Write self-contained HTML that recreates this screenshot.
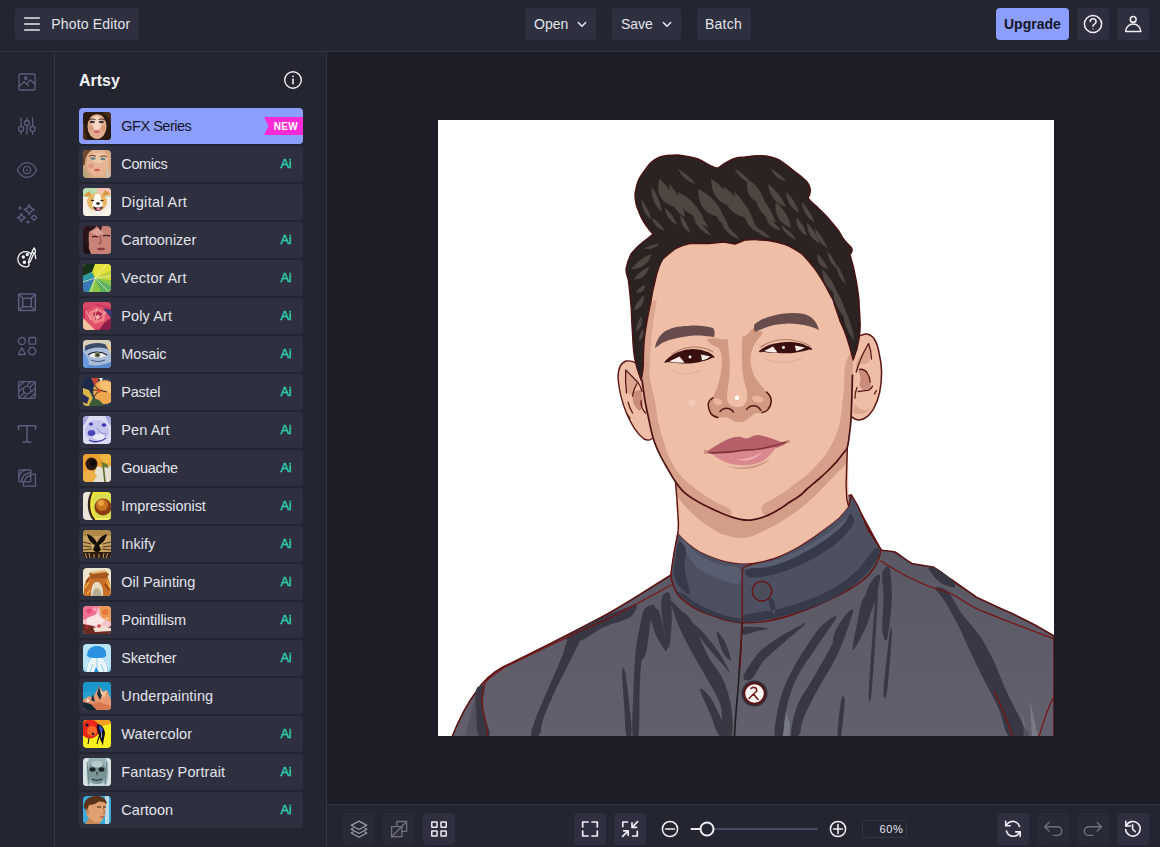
<!DOCTYPE html>
<html lang="en">
<head>
<meta charset="utf-8">
<title>Photo Editor</title>
<style>
*{box-sizing:border-box;margin:0;padding:0}
html,body{width:1160px;height:847px;overflow:hidden;background:#1c1d27;font-family:"Liberation Sans",sans-serif;color:#e6e7ee}
.abs{position:absolute}
#top{position:absolute;left:0;top:0;width:1160px;height:52px;background:#232531;border-bottom:1px solid #343648}
.btn{position:absolute;top:8px;height:32px;background:#2e3040;border-radius:4px;font-size:14px;line-height:32px;color:#e3e4ea;white-space:nowrap}
.btn span{position:absolute;top:0}
#rail{position:absolute;left:0;top:52px;width:55px;height:795px;background:#232531;border-right:1px solid #343648}
#panel{position:absolute;left:55px;top:52px;width:272px;height:795px;background:#232531;border-right:1px solid #343648}
#stage{position:absolute;left:327px;top:52px;width:833px;height:752px;background:#1c1d27}
#bot{position:absolute;left:327px;top:804px;width:833px;height:43px;background:#232531;border-top:1px solid #343648}
.ico{position:absolute;left:15px;width:24px;height:24px;fill:none;stroke:#5b5e7e;stroke-width:1.4;stroke-linecap:round;stroke-linejoin:round}
h2{position:absolute;left:79px;top:71px;letter-spacing:0;font-size:16px;font-weight:700;color:#f2f3f7;line-height:20px}
.it{position:absolute;left:79px;width:224px;height:36px;background:#2e3040;border-radius:4px}
.it .th{position:absolute;left:4px;top:4px;width:28px;height:28px;border-radius:4px;overflow:hidden}
.it .th svg{display:block;width:28px;height:28px}
.it .lb{position:absolute;left:42.300px;top:0;line-height:36px;font-size:14.5px;color:#e3e4ea;white-space:nowrap}
.it .ai{position:absolute;left:201.500px;top:0;line-height:36px;font-size:13px;font-weight:400;color:#2fd2b0;letter-spacing:-.3px;-webkit-text-stroke:.35px #2fd2b0}
.it.sel{background:#8c9eff}
.it.sel .lb{color:#15161f}
.bb{position:absolute;top:8px;width:32px;height:32px;border-radius:4px;background:#2e3040}
.bb.dis{background:#282a37}
.bb svg{position:absolute;left:4px;top:4px;width:24px;height:24px;fill:none;stroke:#e6e7ee;stroke-width:1.5;stroke-linecap:round;stroke-linejoin:round}
.bb.dis svg{stroke:#7b7d8c}
</style>
</head>
<body>
<div id="top">
  <div class="btn" style="left:15px;width:124px">
    <svg class="abs" style="left:8px;top:8px" width="18" height="16" viewBox="0 0 18 16" fill="none" stroke="#e6e7ee" stroke-width="1.5" stroke-linecap="round"><path d="M1.7 2h14.6M1.7 8h14.6M1.7 14h14.6"/></svg>
    <span style="left:36.300px;letter-spacing:.16px">Photo Editor</span>
  </div>
  <div class="btn" style="left:525px;width:71px"><span style="left:9px">Open</span>
    <svg class="abs" style="left:52px;top:13px" width="10" height="7" viewBox="0 0 10 7" fill="none" stroke="#e6e7ee" stroke-width="1.5" stroke-linecap="round" stroke-linejoin="round"><path d="M1.3 1.5 5 5.3 8.7 1.5"/></svg></div>
  <div class="btn" style="left:612px;width:69px"><span style="left:9px">Save</span>
    <svg class="abs" style="left:50px;top:13px" width="10" height="7" viewBox="0 0 10 7" fill="none" stroke="#e6e7ee" stroke-width="1.5" stroke-linecap="round" stroke-linejoin="round"><path d="M1.3 1.5 5 5.3 8.7 1.5"/></svg></div>
  <div class="btn" style="left:697px;width:54px"><span style="left:8px;letter-spacing:.24px">Batch</span></div>
  <div class="btn" style="left:996px;width:73px;background:#8c9eff;color:#15161f;font-weight:700"><span style="left:8px">Upgrade</span></div>
  <div class="btn" style="left:1077px;width:32px">
    <svg class="abs" style="left:4px;top:4px" width="24" height="24" viewBox="0 0 24 24" fill="none" stroke="#f0f0f4" stroke-width="1.5" stroke-linecap="round" stroke-linejoin="round"><circle cx="12" cy="12" r="8.6"/><path d="M9.2 9.6a2.9 2.9 0 1 1 4.3 2.5c-.9.5-1.5 1-1.500 2.100"/><circle cx="12" cy="16.900" r=".6" fill="#f0f0f4" stroke="none"/></svg>
  </div>
  <div class="btn" style="left:1117px;width:32px">
    <svg class="abs" style="left:4px;top:4px" width="24" height="24" viewBox="0 0 24 24" fill="none" stroke="#f0f0f4" stroke-width="1.5" stroke-linecap="round" stroke-linejoin="round"><circle cx="12.200" cy="7.400" r="2.900"/><path d="M4.600 19.600a7.600 7.600 0 0 1 15.200 0z"/></svg>
  </div>
</div>

<div id="rail">
<svg class="abs" style="left:0;top:0" width="54" height="795" viewBox="0 52 54 795" fill="none" stroke="#5b5e7e" stroke-width="1.300" stroke-linecap="round" stroke-linejoin="round">
  <!-- image manager -->
  <g><rect x="19" y="74" width="16" height="16" rx="1.2"/><circle cx="25.700" cy="78.300" r="1.300"/><path d="M19.200 86.200 24 81.700 28.300 85.600M26.400 83.900 30.500 80 34.800 84"/></g>
  <!-- edit sliders -->
  <g><path d="M21.100 118v8.200M21.100 131.700v2.500M26.900 118v2.300M26.900 125.800v8.400M32.600 118v8.200M32.600 131.700v2.500"/><circle cx="21.100" cy="128.900" r="2.500"/><circle cx="26.900" cy="123" r="2.500"/><circle cx="32.600" cy="128.900" r="2.500"/></g>
  <!-- touch up eye -->
  <g><path d="M17.300 170c2.500-4.700 6-7.300 9.700-7.300s7.200 2.600 9.700 7.300c-2.500 4.700-6 7.300-9.700 7.300s-7.200-2.600-9.700-7.300z"/><circle cx="27" cy="170" r="3.700"/><circle cx="27" cy="170" r="1" fill="#5b5e7e" stroke="none"/></g>
  <!-- effects sparkles -->
  <g stroke-width="1.300"><path d="M29.200 204.500c.7 3 1.900 4.400 5.200 5.200-3.300.8-4.500 2.200-5.200 5.200-.7-3-1.900-4.400-5.200-5.200 3.300-.8 4.500-2.200 5.200-5.200z"/><path d="M21.500 213.500c.6 2.500 1.600 3.600 4.200 4.200-2.600.6-3.600 1.700-4.200 4.200-.6-2.500-1.600-3.600-4.200-4.200 2.600-.6 3.600-1.700 4.200-4.200z"/><path d="M34 215l2.700 2.700-2.700 2.700-2.700-2.700z"/><circle cx="20" cy="208" r=".9" fill="#5b5e7e"/><circle cx="28" cy="222" r=".9" fill="#5b5e7e"/></g>
  <!-- artsy palette (active) -->
  <g stroke="#f4f4f8" stroke-width="1.300"><path d="M30.600 253.600a7.600 7.600 0 1 0-3.300 13c1.600-.3 2.200-1.500 1.700-2.700-.5-1.200.2-2.200 1.300-2.500"/><circle cx="23.300" cy="257" r="1" fill="#f4f4f8"/><circle cx="27.300" cy="254.600" r="1" fill="#f4f4f8"/><circle cx="24.400" cy="262.300" r="1.100" fill="#f4f4f8"/><path d="M34.300 247.900c1.200 1.800 1.400 3.600.6 5.400l-2.900-1.300c.6-1.500 1.400-2.900 2.300-4.100z"/><path d="M32.200 252l-3.400 8.300-.3 2.300 1.900-1.400 3.600-8.300"/><path d="M34.900 254l.9 4.500"/></g>
  <!-- frames -->
  <g stroke-width="1.500"><rect x="18.700" y="293.900" width="16.600" height="16.600" rx="1"/><rect x="22.800" y="298.300" width="8.400" height="8.400"/><path d="M18.900 294.200l3.900 4.100M35.100 294.200l-3.900 4.100M18.900 310.300l3.900-3.600M35.100 310.300l-3.900-3.600"/></g>
  <!-- graphics shapes -->
  <g><circle cx="21.900" cy="341" r="3.500"/><rect x="29" y="337.500" width="6.700" height="6.700" rx=".8"/><path d="M21.900 347.800l3.600 6.700h-7.200z"/><path d="M30.100 347.600h3.900l2 3.500-2 3.500h-3.900l-2-3.500z"/></g>
  <!-- textures -->
  <g stroke-width="1.300"><rect x="18.700" y="381.700" width="16.600" height="16.600" rx="1"/><circle cx="27" cy="390" r="3.800" stroke-dasharray="2.200 1"/><path d="M19 386.500l4.800-4.500M19 391.500l3.500-3.300M19 397.800l5-4.800M35 393.500l-4.800 4.500M35 388.500l-3.500 3.300M35 382.200l-5 4.800M23.500 398l3-2.800M30.500 382l-3 2.800"/></g>
  <!-- text -->
  <g stroke-width="1.500"><path d="M18.500 429.400v-3.600h17v3.600M27 425.800v16.100M23.100 441.900h7.800"/></g>
  <!-- overlays -->
  <g><rect x="18.800" y="469.800" width="12" height="12" rx=".8"/><path d="M23.400 482v4.200h12v-12h-4.400"/><path d="M19 476.500c.8-3.600 3-5.700 6.600-6.500M21.400 481.500c.3-5 2.800-8 9.200-9M24.500 481.700c.5-3.500 2.500-5.500 6.100-6.200"/></g>
</svg>
</div>
<div id="panel"></div>
<h2>Artsy</h2>
<svg class="abs" style="left:281px;top:68px" width="24" height="24" viewBox="0 0 24 24" fill="none" stroke="#f0f0f4" stroke-width="1.400" stroke-linecap="round"><circle cx="12" cy="12" r="8.300"/><path d="M12 11.200v4.600" stroke-width="1.600"/><circle cx="12" cy="8.300" r=".9" fill="#f0f0f4" stroke="none"/></svg>
<div class="it sel" style="top:108px"><div class="th"><svg viewBox="0 0 28 28"><rect width="28" height="28" fill="#2a1a12"/><ellipse cx="14" cy="14.500" rx="9.500" ry="12.500" fill="#e2ad8e"/><ellipse cx="13.500" cy="11" rx="5.500" ry="7" fill="#f4d6c2"/><path d="M0 0h28v28h-4.500c2.500-8 2.500-18-1.500-23.500-3-3-13-3-16.500.5C2 10 2.500 20 4.500 28H0z" fill="#2a1a12"/><path d="M2 14c0 5 1 10 2.500 14H0V10zM24 4c3 3 4 8 4 12V0h-8z" fill="#4a2c18"/><ellipse cx="9.300" cy="10" rx="2.600" ry="1.200" fill="#3c3436"/><ellipse cx="18.300" cy="10" rx="2.600" ry="1.200" fill="#3c3436"/><path d="M6 8c2-1.200 4.500-1.200 6.500-.3M15.500 7.700c2-1 4.500-1 6.500.3" stroke="#2a1a12" stroke-width=".9" fill="none"/><ellipse cx="13.800" cy="19.800" rx="3" ry="1.400" fill="#d0606a"/><ellipse cx="8" cy="16" rx="2.500" ry="3" fill="#d49478" opacity=".7"/><ellipse cx="20" cy="16" rx="2.500" ry="3" fill="#d49478" opacity=".7"/></svg></div><div class="lb" style="letter-spacing:-0.49px">GFX Series</div><svg class="abs" style="left:185px;top:9px" width="39" height="18" viewBox="0 0 39 18"><path d="M0 0h39v18H0l4.500-9z" fill="#fb29d6"/><text x="21.800" y="12.800" text-anchor="middle" font-family="Liberation Sans,sans-serif" font-weight="700" font-size="10" fill="#fff" letter-spacing=".3">NEW</text></svg></div>
<div class="it" style="top:146px"><div class="th"><svg viewBox="0 0 28 28"><rect width="28" height="28" fill="#d9a684"/><ellipse cx="15" cy="13" rx="11" ry="14" fill="#e7b493"/><ellipse cx="16" cy="8" rx="8" ry="5" fill="#f1c7a8"/><path d="M0 0h9C4 3 2 8 2 14L0 16z" fill="#6b4a32"/><path d="M0 16l3 4 4 8H0z" fill="#b9a67a"/><path d="M24 14c2 4 2 9 4 12v2h-6c2-4 2-9 2-14z" fill="#c9c0a8"/><ellipse cx="10" cy="8.500" rx="2.600" ry="1.200" fill="#5d7e84"/><ellipse cx="20" cy="9" rx="2.600" ry="1.200" fill="#5d7e84"/><path d="M6 6.500c2-1.500 5-1.500 7 0M17 7c2-1.500 5-1.500 7 0" stroke="#5a3520" stroke-width="1" fill="none"/><ellipse cx="14" cy="20" rx="3" ry="1.300" fill="#c9615a"/><ellipse cx="8" cy="16" rx="3" ry="2.500" fill="#e09a84"/></svg></div><div class="lb" style="letter-spacing:-0.38px">Comics</div><div class="ai">Ai</div></div>
<div class="it" style="top:184px"><div class="th"><svg viewBox="0 0 28 28"><rect width="28" height="28" fill="#f3ede4"/><path d="M0 0h28v9H0z" fill="#b9dfb0"/><path d="M14 0h14v8H14z" fill="#f4c3b4"/><path d="M0 8l6-5 4 6zM28 6l-6-4-4 7z" fill="#d99a48"/><ellipse cx="14" cy="14" rx="10" ry="9" fill="#e9b566"/><path d="M12 6h5l3 12-5 8-6-8z" fill="#fffdf8"/><path d="M2 18c4 6 8 9 12 9s9-3 12-9l2 10H0z" fill="#fbf4e8"/><ellipse cx="9.500" cy="12.500" rx="1.800" ry=".8" fill="#3a2a1a"/><ellipse cx="19" cy="12.500" rx="1.800" ry=".8" fill="#3a2a1a"/><ellipse cx="15" cy="15.500" rx="1.800" ry="1.300" fill="#1a1210"/><path d="M10 18c3 2 7 2 10 0-1 4-3 5-5 5s-4-1-5-5z" fill="#3a1a1a"/><ellipse cx="15.500" cy="21" rx="2.200" ry="1.400" fill="#f08aa0"/></svg></div><div class="lb" style="letter-spacing:0.35px">Digital Art</div></div>
<div class="it" style="top:222px"><div class="th"><svg viewBox="0 0 28 28"><rect width="28" height="28" fill="#c47a70"/><path d="M0 0h14C8 4 7 12 6 20L3 28H0z" fill="#2a161a"/><path d="M6 6c4-4 12-5 22-4v26H8c-2-6-3-14-2-22z" fill="#c98278"/><path d="M8 6c2-3 6-4 10-4l2 6-6 2z" fill="#dba094"/><path d="M0 18l5 2 3 8H0z" fill="#1e1014"/><path d="M9 11c2-.8 4-.8 6 0M20 10c2-.8 4-.8 7 0" stroke="#3a1a1e" stroke-width="1.300" fill="none"/><path d="M17 9l1 8-3 1" stroke="#8a4a48" stroke-width="1" fill="none"/><ellipse cx="18" cy="23" rx="4" ry="1.300" fill="#8a3a40"/><path d="M14 0h5l-1 5z" fill="#3a1a1e"/></svg></div><div class="lb" style="letter-spacing:0.0px">Cartoonizer</div><div class="ai">Ai</div></div>
<div class="it" style="top:260px"><div class="th"><svg viewBox="0 0 28 28"><rect width="28" height="28" fill="#d8dc3a"/><path d="M0 0h12L9 8 0 12z" fill="#16301c"/><path d="M0 12l9-4 3 6-6 14H0z" fill="#2a9aa0"/><path d="M12 0h16v14L12 14z" fill="#e4e23a"/><path d="M12 14l16-8v8z" fill="#c4d040"/><path d="M6 28l6-14 16 2v12z" fill="#8cc848"/><path d="M12 14L28 22v6H18z" fill="#5cb060"/><path d="M0 20c3-4 7-6 12-6L4 28H0z" fill="#3a78b8"/><path d="M12 14L24 0M12 14l16-2M12 14l14 14M12 14L8 28M12 14L0 18" stroke="#f4f8c8" stroke-width=".7" fill="none"/></svg></div><div class="lb" style="letter-spacing:0.25px">Vector Art</div><div class="ai">Ai</div></div>
<div class="it" style="top:298px"><div class="th"><svg viewBox="0 0 28 28"><rect width="28" height="28" fill="#c4305a"/><path d="M0 0h28v6L14 2 0 8z" fill="#d84868"/><path d="M2 8l10-5 12 3 4 10-6 10-12 2-8-8z" fill="#e0506c"/><path d="M6 10l8-4 9 4-2 9-9 3-6-6z" fill="#f08088"/><path d="M10 11l5-2 5 3-2 5-6 1z" fill="#b82850"/><path d="M0 16l8 8 4 4H0z" fill="#f4c4a0"/><path d="M22 20l6-4v12H16z" fill="#8a1c48"/><path d="M12 14l4-1 1 3-4 1z" fill="#f8b0a8"/><path d="M20 6l8 2v8z" fill="#3a3a78"/><path d="M3 9l5 9M14 6l-3 12M23 10l-10 8" stroke="#f8d8c8" stroke-width=".6" fill="none"/></svg></div><div class="lb" style="letter-spacing:0.12px">Poly Art</div><div class="ai">Ai</div></div>
<div class="it" style="top:336px"><div class="th"><svg viewBox="0 0 28 28"><rect width="28" height="28" fill="#a8bcd8"/><path d="M0 0h28v8C20 3 8 3 0 9z" fill="#d8d0b8"/><path d="M2 6c8-4 18-4 26 1v4C20 6 9 7 2 11z" fill="#3a4a6a"/><path d="M0 22c6 4 16 5 28 0v6H0z" fill="#5a8ad0"/><path d="M0 12c4 4 6 8 6 14l-6 2z" fill="#6a9ae0"/><path d="M5 15c5-4 13-4 19 0-6 4-14 4-19 0z" fill="#f4f4f0"/><path d="M5 15c5-4 13-4 19 0" stroke="#1a2038" stroke-width="1.200" fill="none"/><circle cx="14.500" cy="15" r="2.800" fill="#7a8a5a"/><circle cx="14.500" cy="15" r="1.200" fill="#1a2030"/><path d="M22 4l6 2v8z" fill="#e8c890"/><path d="M8 20c4 2 10 2 14 0" stroke="#2a3a68" stroke-width=".8" fill="none"/></svg></div><div class="lb" style="letter-spacing:-0.15px">Mosaic</div><div class="ai">Ai</div></div>
<div class="it" style="top:374px"><div class="th"><svg viewBox="0 0 28 28"><rect width="28" height="28" fill="#2a3a5a"/><path d="M12 6c5-5 12-5 16-2v20c-6 4-12 2-15-2s-4-11-1-16z" fill="#f0a850"/><path d="M16 6c4-3 8-3 12-1v10c-5 0-9-3-12-9z" fill="#f8c070"/><path d="M0 0h8l4 8-6 4-6-2z" fill="#1a2a4a"/><path d="M8 0h8l-4 8z" fill="#c84838"/><path d="M0 10l6 2 4 8-4 8H0z" fill="#d8b848"/><path d="M6 28l4-8 6 2 6 6z" fill="#3a5a38"/><path d="M0 16l6 4-2 6-4-2z" fill="#2a2a58"/><path d="M10 20l6-8M12 8l4 4 8 2M6 12l10 0" stroke="#1a1a2a" stroke-width=".9" fill="none"/><path d="M14 12l3-1 1 3-3 1z" fill="#e84828"/><path d="M16 0h4l-2 4z" fill="#f4f0d8"/></svg></div><div class="lb" style="letter-spacing:-0.22px">Pastel</div><div class="ai">Ai</div></div>
<div class="it" style="top:412px"><div class="th"><svg viewBox="0 0 28 28"><rect width="28" height="28" fill="#dcdcf4"/><ellipse cx="14" cy="15" rx="12" ry="11" fill="#c4c4ec"/><path d="M0 0h6L2 8 0 10zM28 0h-6l4 8 2 2z" fill="#a8a8e0"/><ellipse cx="8" cy="8" rx="2" ry="1.500" fill="#3a3ab0"/><ellipse cx="21" cy="9" rx="2.400" ry="1.800" fill="#3a3ab0"/><ellipse cx="8.500" cy="17" rx="3.800" ry="3" fill="#4848b8"/><path d="M6 24c5 3 12 2 17-2" stroke="#4040b0" stroke-width="1.300" fill="none"/><path d="M14 12c2 4 6 6 10 6" stroke="#8080d0" stroke-width=".8" fill="none"/><ellipse cx="16" cy="21" rx="6" ry="3" fill="#e8e8f8"/></svg></div><div class="lb" style="letter-spacing:0.1px">Pen Art</div><div class="ai">Ai</div></div>
<div class="it" style="top:450px"><div class="th"><svg viewBox="0 0 28 28"><rect width="28" height="28" fill="#e8a838"/><path d="M14 12h14v16H8z" fill="#e4e0d4"/><path d="M0 0h28v8l-8 6-6-2-8 8-6 2z" fill="#e8a030"/><ellipse cx="8.500" cy="10" rx="6" ry="6.500" fill="#2a1810"/><path d="M16 2l6-2h6v8l-6 2z" fill="#f0b840"/><path d="M0 18l8-2 6 6-4 6H0z" fill="#f0b048"/><path d="M20 10l2 18" stroke="#5a6a28" stroke-width="1.600" fill="none"/><path d="M18 8l6 2 2 4-6-1z" fill="#6a7a30"/><ellipse cx="10" cy="9" rx="3" ry="3.500" fill="#120a08"/></svg></div><div class="lb" style="letter-spacing:-0.33px">Gouache</div><div class="ai">Ai</div></div>
<div class="it" style="top:488px"><div class="th"><svg viewBox="0 0 28 28"><rect width="28" height="28" fill="#ece6da"/><path d="M8 0h20v28H10C4 22 3 8 8 0z" fill="#3a2418"/><path d="M10 0h18v27H12C6 21 6 8 10 0z" fill="#f0e438"/><path d="M12 2h16v24H14C9 20 9 8 12 2z" fill="#d8dc50"/><circle cx="20" cy="15" r="8.500" fill="#8a3c10"/><circle cx="19" cy="13" r="6" fill="#c87420"/><circle cx="18" cy="11" r="3" fill="#e8a040"/><path d="M12 26h16v2H12z" fill="#f4ec60"/></svg></div><div class="lb" style="letter-spacing:-0.07px">Impressionist</div><div class="ai">Ai</div></div>
<div class="it" style="top:526px"><div class="th"><svg viewBox="0 0 28 28"><rect width="28" height="28" fill="#c8a060"/><path d="M0 0h28v6H0z" fill="#b08848"/><path d="M4 4c4 1 8 4 10 9 2-5 6-8 10-9-1 5-4 9-8 11l2 5-4 3-4-3 2-5C8 13 5 9 4 4z" fill="#140e08"/><path d="M0 22h28v6H0z" fill="#2a1c10"/><path d="M0 12l8 2M0 16l8 1M0 20l9-1M28 12l-8 2M28 16l-8 1M28 20l-9-1" stroke="#2a1c10" stroke-width=".8" fill="none"/><path d="M2 23l2 5M6 23l1 5M11 24v4M16 24v4M21 23l-1 5M25 23l-2 5" stroke="#c8a060" stroke-width="1" fill="none"/></svg></div><div class="lb" style="letter-spacing:0.03px">Inkify</div><div class="ai">Ai</div></div>
<div class="it" style="top:564px"><div class="th"><svg viewBox="0 0 28 28"><rect width="28" height="28" fill="#ece4cc"/><path d="M1 28C0 16 4 8 10 6l10-1c6 2 8 12 8 23h-8c0-8-2-14-6-14s-6 6-6 14z" fill="#c8702a"/><path d="M6 5l16-2 4 3-2 4-16 1z" fill="#a85820"/><path d="M8 4l14-2 2 2-15 2z" fill="#e8b870"/><path d="M8 28c0-8 2-14 6-14s6 6 6 14z" fill="#e4dcc4"/><path d="M9 28c1-5 3-8 5-8s4 3 5 8z" fill="#b8ac90"/><path d="M2 20l4-6M24 12l3 8M4 26l3-4" stroke="#f0c040" stroke-width="1.200" fill="none"/><path d="M22 16l4 6M3 14l3-4" stroke="#7a2c10" stroke-width="1.200" fill="none"/></svg></div><div class="lb" style="letter-spacing:-0.02px">Oil Painting</div><div class="ai">Ai</div></div>
<div class="it" style="top:602px"><div class="th"><svg viewBox="0 0 28 28"><rect width="28" height="28" fill="#f4c4cc"/><path d="M0 0h16l-4 10-12 4z" fill="#f07090"/><path d="M16 0h12v16l-10-4z" fill="#e89858"/><path d="M4 12l10-4 8 6-6 6-12-2z" fill="#fae4e4"/><path d="M0 18l10 2 8 4 10-4v8H0z" fill="#6a2a20"/><path d="M10 22l10-2 8 2v3l-16 1z" fill="#f4e0d0"/><circle cx="6" cy="5" r="2.500" fill="#e84878"/><circle cx="22" cy="6" r="3" fill="#e87838"/><circle cx="12" cy="3" r="2" fill="#f8a0b8"/><circle cx="4" cy="21" r="2" fill="#a82838"/><circle cx="24" cy="13" r="2" fill="#f4b880"/><circle cx="16" cy="20" r="1.800" fill="#c84848"/></svg></div><div class="lb" style="letter-spacing:-0.05px">Pointillism</div><div class="ai">Ai</div></div>
<div class="it" style="top:640px"><div class="th"><svg viewBox="0 0 28 28"><rect width="28" height="28" fill="#b8e4f8"/><path d="M4 12C4 4 10 2 14 2s10 2 9 10c-2 2-5 2-9 2s-8 0-10-2z" fill="#2a90e0"/><path d="M2 28c0-8 3-12 6-14h12c3 2 6 6 6 14z" fill="#e8f6fc"/><path d="M8 14c-3 4-5 8-5 14M20 14c3 4 5 8 5 14M14 14v14M10 20l-3 8M18 20l3 8" stroke="#7ab8e0" stroke-width=".7" fill="none"/><path d="M11 28l2-5 3 5z" fill="#2a90e0"/><path d="M0 22l4 6H0zM28 22l-4 6h4z" fill="#8cccf0"/></svg></div><div class="lb" style="letter-spacing:-0.28px">Sketcher</div><div class="ai">Ai</div></div>
<div class="it" style="top:678px"><div class="th"><svg viewBox="0 0 28 28"><rect width="28" height="28" fill="#2aa0d0"/><path d="M0 0h28v10H0z" fill="#1a98cc"/><path d="M0 18l6-4 4 2 6-12 4 6 4-2 4 10v10H0z" fill="#e89870"/><path d="M16 4l-2 8 3 6 3-8z" fill="#1a3038"/><path d="M10 12l-2 6 4 2z" fill="#1a3038"/><path d="M16 4l4 6 4-2-3 8-3-4z" fill="#f4c4a0"/><path d="M0 20l8 2 6 6H0z" fill="#142830"/><path d="M8 22l8-2 12 4v4H14z" fill="#d87850"/><path d="M4 16l3 3-3 1z" fill="#f8f0e8"/></svg></div><div class="lb" style="letter-spacing:0.13px">Underpainting</div></div>
<div class="it" style="top:716px"><div class="th"><svg viewBox="0 0 28 28"><rect width="28" height="28" fill="#f8f020"/><path d="M0 0h28v4L0 10z" fill="#f4a020"/><circle cx="7" cy="9" r="9.500" fill="#e82818"/><circle cx="9" cy="11" r="5" fill="#f86828"/><circle cx="4" cy="5" r="1.600" fill="#1a1a38"/><circle cx="10" cy="14" r="1.300" fill="#1a1a38"/><path d="M14 4c4 0 8 4 8 10-1 4-2 8-2 12-1-4-3-6-4-10s-3-8-2-12z" fill="#0a0a18"/><path d="M16 6c2 0 4 2 4 5l-3 1z" fill="#3858d8"/><path d="M6 18l-1 6M16 16l-2 8" stroke="#0a0a18" stroke-width="1" fill="none"/><path d="M18 12c1 2 1 4 0 6" stroke="#f8f8f8" stroke-width=".8" fill="none"/></svg></div><div class="lb" style="letter-spacing:0.14px">Watercolor</div><div class="ai">Ai</div></div>
<div class="it" style="top:754px"><div class="th"><svg viewBox="0 0 28 28"><rect width="28" height="28" fill="#8aa4a8"/><path d="M0 0h28v28H0z" fill="#9ab4b8"/><path d="M0 0h6C3 8 3 18 5 28H0zM28 0h-5c3 8 3 18 0 28h5z" fill="#d8e4e4"/><ellipse cx="14" cy="14" rx="9" ry="12" fill="#7a9498"/><ellipse cx="14" cy="6" rx="6" ry="3.500" fill="#b8cccc"/><ellipse cx="9.500" cy="11.500" rx="3" ry="2.200" fill="#1a2428"/><ellipse cx="18.500" cy="11.500" rx="3" ry="2.200" fill="#1a2428"/><path d="M13 14l1 4 1-4z" fill="#2a3a3e"/><path d="M9 21c3 1.500 7 1.500 10 0" stroke="#243034" stroke-width="1.100" fill="none"/><path d="M6 24c4 3 12 3 16 0v4H6z" fill="#c8d8d8"/><path d="M4 4l2 22M24 4l-2 22" stroke="#5a7478" stroke-width=".8" fill="none"/></svg></div><div class="lb" style="letter-spacing:0.09px">Fantasy Portrait</div><div class="ai">Ai</div></div>
<div class="it" style="top:792px"><div class="th"><svg viewBox="0 0 28 28"><rect width="28" height="28" fill="#3aa8d8"/><path d="M22 0h4v28h-4z" fill="#b8dce8"/><path d="M2 10c0-6 6-9 12-9s9 3 9 8l-1 10-4 7h-8l-6-6z" fill="#e0a070"/><path d="M1 12C0 4 6 0 13 0c6 0 10 2 11 8-3-2-6-3-9-2-2 2-6 3-9 3l-2 6z" fill="#5a3418"/><path d="M6 22l6 4h6l-2 2H2z" fill="#c88858"/><path d="M14 11h4M20 11h3" stroke="#3a2010" stroke-width="1.200" fill="none"/><path d="M20 12l2 5-2 1" stroke="#a86840" stroke-width=".9" fill="none"/><path d="M17 21h4" stroke="#8a4030" stroke-width="1" fill="none"/><path d="M3 12l3 3-1 5z" fill="#c08050"/></svg></div><div class="lb" style="letter-spacing:0.03px">Cartoon</div><div class="ai">Ai</div></div>
<div id="stage">
<svg class="abs" style="left:111px;top:68px" width="616" height="616" viewBox="438 120 616 616">
<defs>
<clipPath id="cv"><rect x="438" y="120" width="616" height="616"/></clipPath>
<linearGradient id="sh" x1="0" y1="0" x2="0" y2="1"><stop offset="0" stop-color="#575663"/><stop offset="1" stop-color="#63606d"/></linearGradient>
</defs>
<rect x="438" y="120" width="616" height="616" fill="#fff"/>
<g clip-path="url(#cv)" stroke-linejoin="round" stroke-linecap="round">
<!-- SHIRT -->
<path id="shirt" d="M452 737C458 722 466 705 476 692C483 681 492 673 503 667C530 654 560 639 598 619C620 608 645 591 671 575L678 533L851 495L881 550C886 551 891 551 895 552C901 556 906 560 912 563.500C919 565 926 566 933 567C940 571 946 576 952 580C960 586 968 591 976 597C987 602 999 608 1011 613C1019 617 1027 621 1035 625L1054 636V737z" fill="url(#sh)" stroke="#5a1212" stroke-width="1.600"/>
<!-- shirt folds dark -->
<path fill="#383844" d="M671.0 602.4C671.4 599.7 677.9 607.6 681.4 610.7C684.8 613.8 687.2 613.4 691.7 621.0C696.2 628.6 703.1 646.6 708.3 656.2C713.4 665.9 719.0 670.7 722.8 679.0C726.6 687.2 729.5 696.6 731.0 705.9C732.6 715.2 733.4 730.0 732.1 734.8C730.7 739.7 724.7 739.7 722.8 734.8C720.9 730.0 723.1 714.8 720.7 705.9C718.3 696.9 713.1 690.0 708.3 681.0C703.4 672.1 696.6 661.0 691.7 652.1C686.9 643.1 682.8 635.5 679.3 627.2C675.9 619.0 670.7 605.2 671.0 602.4zM688.6 621.0C687.6 618.3 697.1 626.2 702.1 631.4C707.1 636.6 714.0 645.2 718.6 652.1C723.3 659.0 729.3 670.7 730.0 672.8C730.7 674.8 726.4 668.6 722.8 664.5C719.1 660.3 714.0 655.2 708.3 647.9C702.6 640.7 689.7 623.8 688.6 621.0zM650.3 612.8C651.0 609.3 655.9 605.5 658.6 610.7C661.4 615.9 665.9 637.2 666.9 643.8C667.9 650.3 666.9 652.1 664.8 650.0C662.8 647.9 656.9 637.6 654.5 631.4C652.1 625.2 649.7 616.2 650.3 612.8zM640.0 631.4C641.7 624.1 649.3 611.4 650.3 614.8C651.4 618.3 647.9 644.8 646.2 652.1C644.5 659.3 641.0 661.7 640.0 658.3C639.0 654.8 638.3 638.6 640.0 631.4zM772.4 641.7C780.7 636.2 803.4 623.1 805.5 623.1C807.6 623.1 791.7 635.5 784.8 641.7C777.9 647.9 769.7 654.1 764.1 660.3C758.6 666.6 755.2 676.2 751.7 679.0C748.3 681.7 742.8 680.7 743.4 676.9C744.1 673.1 751.0 662.1 755.9 656.2C760.7 650.3 764.1 647.2 772.4 641.7zM822.1 625.2C826.6 621.0 837.6 613.1 836.6 616.9C835.5 620.7 822.4 637.9 815.9 647.9C809.3 657.9 802.1 667.2 797.2 676.9C792.4 686.6 789.3 696.2 786.9 705.9C784.5 715.5 784.8 730.0 782.8 734.8C780.7 739.7 774.8 741.0 774.5 734.8C774.1 728.6 777.6 708.6 780.7 697.6C783.8 686.6 788.3 677.9 793.1 668.6C797.9 659.3 804.8 649.0 809.7 641.7C814.5 634.5 817.6 629.3 822.1 625.2zM842.8 621.0C846.6 614.8 853.8 605.5 853.1 610.7C852.4 615.9 844.5 639.0 838.6 652.1C832.8 665.2 823.8 678.3 817.9 689.3C812.1 700.3 806.6 710.7 803.4 718.3C800.3 725.9 801.4 732.1 799.3 734.8C797.2 737.6 791.4 739.7 791.0 734.8C790.7 730.0 793.4 715.5 797.2 705.9C801.0 696.2 808.3 686.6 813.8 676.9C819.3 667.2 825.5 657.2 830.3 647.9C835.2 638.6 839.0 627.2 842.8 621.0zM863.4 598.3C866.2 593.4 873.1 590.0 873.8 594.1C874.5 598.3 871.0 613.8 867.6 623.1C864.1 632.4 854.8 650.0 853.1 650.0C851.4 650.0 855.5 631.7 857.2 623.1C859.0 614.5 860.7 603.1 863.4 598.3zM700.0 689.3C700.0 686.6 706.6 692.1 710.3 697.6C714.1 703.1 720.0 716.2 722.8 722.4C725.5 728.6 727.6 732.8 726.9 734.8C726.2 736.9 721.4 738.3 718.6 734.8C715.9 731.4 713.4 721.7 710.3 714.1C707.2 706.6 700.0 692.1 700.0 689.3zM743.4 627.2C747.6 626.2 766.2 627.6 768.3 628.3C770.3 629.0 760.0 630.3 755.9 631.4C751.7 632.4 745.5 635.2 743.4 634.5C741.4 633.8 739.3 628.3 743.4 627.2zM716.6 631.4C716.9 629.7 722.4 636.9 724.8 641.7C727.2 646.6 731.4 658.6 731.0 660.3C730.7 662.1 725.2 656.9 722.8 652.1C720.3 647.2 716.2 633.1 716.6 631.4zM566.3 637.6C568.0 635.2 576.6 630.7 582.8 627.2C589.0 623.8 596.6 620.0 603.5 616.9C610.4 613.8 618.7 610.7 624.2 608.6C629.7 606.6 635.6 603.1 636.6 604.5C637.7 605.9 635.9 613.1 630.4 616.9C624.9 620.7 611.4 623.4 603.5 627.2C595.6 631.0 588.0 637.2 582.8 639.7C577.7 642.1 575.2 642.1 572.5 641.7C569.7 641.4 564.6 640.0 566.3 637.6zM568.3 639.7C571.4 636.6 581.1 632.8 580.8 637.6C580.4 642.4 570.8 659.3 566.3 668.6C561.8 677.9 557.7 685.2 553.9 693.4C550.1 701.7 545.9 711.4 543.5 718.3C541.1 725.2 541.4 732.1 539.4 734.8C537.3 737.6 531.4 738.3 531.1 734.8C530.8 731.4 534.2 722.4 537.3 714.1C540.4 705.9 545.6 694.8 549.7 685.2C553.9 675.5 559.0 663.8 562.1 656.2C565.2 648.6 565.2 642.8 568.3 639.7zM644.9 608.6C647.5 605.2 654.9 602.8 655.2 606.6C655.6 610.3 649.2 622.8 647.0 631.4C644.7 640.0 643.0 648.6 641.8 658.3C640.6 667.9 640.2 676.6 639.7 689.3C639.2 702.1 639.9 727.2 638.7 734.8C637.5 742.4 633.3 742.4 632.5 734.8C631.6 727.2 633.0 703.1 633.5 689.3C634.0 675.5 634.6 662.4 635.6 652.1C636.6 641.7 638.2 634.5 639.7 627.2C641.3 620.0 642.3 612.1 644.9 608.6zM662.5 596.2C663.9 593.4 668.2 590.0 669.7 594.1C671.3 598.3 672.0 612.1 671.8 621.0C671.6 630.0 669.9 646.2 668.7 647.9C667.5 649.7 665.8 637.6 664.6 631.4C663.3 625.2 661.8 616.6 661.4 610.7C661.1 604.8 661.1 599.0 662.5 596.2zM622.1 672.8C622.3 667.2 623.9 665.9 625.2 672.8C626.6 679.7 629.4 703.8 630.4 714.1C631.4 724.5 632.1 731.4 631.4 734.8C630.8 738.3 627.5 739.7 626.3 734.8C625.1 730.0 624.9 716.2 624.2 705.9C623.5 695.5 622.0 678.3 622.1 672.8zM476.3 689.3C477.7 684.8 483.5 684.5 484.6 687.2C485.6 690.0 482.1 700.0 482.5 705.9C482.8 711.7 485.4 717.6 486.6 722.4C487.8 727.2 491.1 732.8 489.7 734.8C488.3 736.9 480.6 738.3 478.3 734.8C476.1 731.4 476.6 721.7 476.3 714.1C475.9 706.6 474.9 693.8 476.3 689.3zM935.5 588.4C935.9 586.6 943.0 586.6 947.3 590.8C951.6 594.9 956.0 605.5 961.5 613.2C967.0 620.8 974.8 628.5 980.4 636.8C985.9 645.0 990.2 653.7 994.5 662.7C998.8 671.8 1002.0 681.6 1006.3 691.1C1010.6 700.5 1016.9 711.9 1020.5 719.4C1024.0 726.9 1029.5 733.2 1027.6 735.9C1025.6 738.7 1013.4 740.2 1008.7 735.9C1004.0 731.6 1002.8 718.2 999.2 710.0C995.7 701.7 991.8 695.0 987.4 686.4C983.1 677.7 978.0 667.9 973.3 658.0C968.5 648.2 963.8 636.8 959.1 627.3C954.4 617.9 948.9 607.9 944.9 601.4C941.0 594.9 935.1 590.2 935.5 588.4zM882.4 573.0C883.4 567.9 887.9 564.0 889.5 568.3C891.0 572.7 892.2 587.2 891.8 599.0C891.4 610.8 888.7 634.0 887.1 639.1C885.5 644.3 883.0 636.4 882.4 629.7C881.8 623.0 883.6 608.5 883.6 599.0C883.6 589.6 881.4 578.2 882.4 573.0zM869.4 584.8C872.8 578.2 879.2 572.3 880.0 575.4C880.8 578.6 877.1 594.7 874.1 603.7C871.2 612.8 865.7 623.4 862.3 629.7C859.0 636.0 854.5 643.9 854.1 641.5C853.7 639.1 857.4 625.0 860.0 615.5C862.5 606.1 866.1 591.5 869.4 584.8zM843.4 617.9C846.4 614.0 851.7 608.1 851.7 610.8C851.7 613.6 846.4 628.1 843.4 634.4C840.5 640.7 835.6 648.6 834.0 648.6C832.4 648.6 832.4 639.5 834.0 634.4C835.6 629.3 840.5 621.8 843.4 617.9zM889.5 634.4C890.8 625.0 892.2 625.0 891.8 634.4C891.4 643.9 888.5 681.6 887.1 691.1C885.7 700.5 883.2 700.5 883.6 691.1C884.0 681.6 888.1 643.9 889.5 634.4zM875.3 599.0C876.8 583.7 878.3 583.7 877.7 599.0C877.1 614.4 873.2 675.7 871.8 691.1C870.3 706.4 868.3 706.4 868.9 691.1C869.5 675.7 873.9 614.4 875.3 599.0zM841.1 700.5C842.3 694.6 844.6 694.6 844.6 700.5C844.6 706.4 842.3 730.0 841.1 735.9C839.9 741.8 837.5 741.8 837.5 735.9C837.5 730.0 839.9 706.4 841.1 700.5zM928.4 568.3C928.0 566.2 933.9 567.5 937.9 569.5C941.8 571.5 949.3 577.2 952.0 580.1C954.8 583.1 956.4 586.8 954.4 587.2C952.4 587.6 944.5 585.6 940.2 582.5C935.9 579.3 928.8 570.5 928.4 568.3z"/>
<path d="M476 692L486 681L482 696L485 717L489 737H465z" fill="#383844" opacity=".35"/>
<!-- light streaks -->
<g fill="#9aa0b2" opacity=".4"><path d="M786 712l4 12-1 13h-6l1-14z"/><path d="M1030 700l8 37h-6z"/><path d="M1022 712l6 25h-4z" opacity=".7"/></g>
<!-- shoulder seams -->
<g fill="none" stroke="#7a1212" stroke-width="1.200"><path d="M671 585C655 594 640 602 625 610C607 620 595 625 583 629.500C568 637 545 648 532 654C522 659 513 663 505 667C496 673 489 677 485 683C483 688 482 694 482 699C482 706 483 712 485 719L488 737"/><path d="M881 561C889 566 897 571 905 575.500C913 579 921 583 928 586C936 589 944 591 952 594C960 599 968 604 976 608.500C987 613 999 618 1011 622.500L1054 639"/><path d="M1054 696C1048 708 1043 722 1039 737"/><path d="M994 691C1001 706 1008 722 1013 737"/></g>
<!-- COLLAR -->
<path d="M678 532.500C685 541 692 547 700 551.500C706 555 713 557 719.500 559.500C727 562 735 563 743 563.500C749 563.500 754 563 759 562.500C766 561 773 559 779 556.500C786 553 793 550 799 546.500C806 542 813 538 818.500 533.500C826 528 832 523 838.500 518C842 514 846 510 848.500 506L851.500 495L858 506L868 529.500L881 549.500C880 556 878 562 874 568C870 574 865 579 859 583C851 589 842 594 833 598C821 604 809 609 797 613C787 617 778 619 768 621C759 622.500 751 623 742 623C736 622.500 731 621 725.500 620C716 617 708 614 700 611C692 607 684 602 678 595C674 589 671.500 582 671 575C672 561 675 547 678 532.500z" fill="#4d5061" stroke="#6a1212" stroke-width="1.400"/>
<path fill="#595d70" d="M681.8 539.6C683.8 539.6 693.4 551.3 699.7 555.4C705.9 559.6 712.9 562.2 719.5 564.4C726.1 566.5 736.0 565.2 739.3 568.3C742.6 571.5 742.6 581.4 739.3 583.2C736.0 585.0 726.1 581.5 719.5 579.2C712.9 576.9 704.9 573.3 699.7 569.3C694.4 565.3 690.7 560.4 687.8 555.4C684.8 550.5 679.8 539.6 681.8 539.6zM747.2 564.4C751.2 563.0 762.4 563.7 771.0 561.4C779.6 559.1 790.2 554.6 798.8 550.5C807.4 546.3 815.0 541.7 822.6 536.6C830.2 531.5 839.9 523.5 844.4 519.7C848.9 515.9 849.7 512.6 849.4 513.8C849.0 514.9 846.9 522.0 842.4 526.7C838.0 531.4 829.9 537.1 822.6 541.9C815.3 546.8 807.4 551.7 798.8 555.8C790.2 560.0 779.6 564.6 771.0 566.9C762.4 569.2 751.2 570.1 747.2 569.7C743.3 569.3 743.3 565.7 747.2 564.4z"/>
<path fill="#373a49" d="M747.2 569.3C750.9 567.5 762.4 568.6 771.0 566.3C779.6 564.0 790.2 559.6 798.8 555.4C807.4 551.3 815.3 546.5 822.6 541.6C829.9 536.6 837.8 530.3 842.4 525.7C847.0 521.1 848.5 514.1 850.3 513.8C852.2 513.5 855.3 519.1 853.3 523.7C851.3 528.3 844.2 536.3 838.4 541.6C832.7 546.8 825.9 551.1 818.6 555.4C811.3 559.7 802.8 564.0 794.8 567.3C786.9 570.6 778.6 573.6 771.0 575.3C763.4 576.9 753.2 578.2 749.2 577.2C745.3 576.2 743.6 571.1 747.2 569.3zM678.8 541.6C680.5 540.6 684.8 544.9 685.8 549.5C686.8 554.1 684.1 562.0 684.8 569.3C685.4 576.6 690.2 589.8 689.7 593.1C689.2 596.4 684.5 592.1 681.8 589.1C679.2 586.2 674.9 580.9 673.9 575.3C672.9 569.6 675.0 561.0 675.9 555.4C676.7 549.8 677.2 542.5 678.8 541.6zM681.8 593.1C685.3 594.8 692.7 601.4 699.7 605.0C706.6 608.6 716.5 612.6 723.4 614.9C730.4 617.2 738.3 617.6 741.3 618.9C744.3 620.1 744.3 622.4 741.3 622.4C738.3 622.4 730.4 620.9 723.4 618.9C716.5 616.8 707.1 614.1 699.7 610.2C692.2 606.2 681.8 597.9 678.8 595.1C675.9 592.2 678.3 591.5 681.8 593.1zM768.1 598.1C768.6 596.7 772.9 598.4 774.0 601.0C775.2 603.7 775.5 612.6 775.0 613.9C774.5 615.2 772.2 611.6 771.0 609.0C769.9 606.3 767.6 599.4 768.1 598.1zM745.3 622.4C750.9 622.8 766.7 619.8 779.0 616.9C791.2 614.0 807.1 609.6 818.6 605.0C830.2 600.4 839.8 595.1 848.4 589.1C857.0 583.2 864.9 575.6 870.2 569.3C875.5 563.0 879.4 554.8 880.1 551.5C880.7 548.2 877.8 546.5 874.1 549.5C870.5 552.5 864.2 563.4 858.3 569.3C852.3 575.3 846.4 580.2 838.4 585.2C830.5 590.1 820.6 595.1 810.7 599.1C800.8 603.0 789.9 606.3 779.0 609.0C768.1 611.6 750.9 612.7 745.3 614.9C739.6 617.2 739.6 622.1 745.3 622.4z"/>
<path d="M759 562.500C754 563 749 565 745.500 566.500C743 567.500 742.300 569 742.300 571C742.300 588 742.300 606 742.300 623" fill="none" stroke="#6a1212" stroke-width="1.300"/>
<path d="M742 623C741.500 640 740 660 738 690C736 710 735 725 734.500 737" fill="none" stroke="#1c1c24" stroke-width="1.600"/>
<path d="M742 623C741.500 640 741 655 740 668" fill="none" stroke="#6a1212" stroke-width="1.200"/>
<circle cx="762" cy="591.200" r="9.800" fill="#4c4e5b" stroke="#6a1212" stroke-width="1.400"/>
<!-- button -->
<circle cx="754.500" cy="693.500" r="13" fill="#30313b"/>
<circle cx="754.500" cy="693.500" r="10.300" fill="#fbf6f4" stroke="#5a1212" stroke-width="2"/>
<path d="M751 688.500c3-2.500 6.500-.5 5.500 3l-3 2.500 4.500 5.500M753.500 694l-4.500 4.500" fill="none" stroke="#7a1a1a" stroke-width="1.600"/>
<!-- NECK -->
<path d="M675 484L678 533C685 541 692 547 700 551.500C713 558 728 563 743 563.500C759 563 773 559 786 553C803 545 821 532 838.500 518C842 514 846 510 848.500 506L848 452z" fill="#eebfa6"/>
<path d="M675.5 481.8C676.5 481.6 681.3 489.8 684.5 492.6C687.7 495.4 695.2 500.1 699.4 502.5C703.6 504.9 711.9 508.8 716.0 510.7C720.1 512.6 725.8 515.2 730.0 516.5C734.2 517.8 742.7 520.2 747.4 520.2C752.1 520.2 761.2 517.8 765.5 516.3C769.8 514.8 777.3 510.3 780.0 508.8C782.7 507.3 783.2 506.6 786.0 504.7C788.8 502.8 798.2 496.8 801.0 494.7C803.8 492.6 804.5 491.2 807.0 489.0C809.5 486.8 817.3 480.4 820.0 478.0C822.7 475.6 825.4 473.2 827.6 471.0C829.8 468.8 834.6 463.9 836.7 461.6C838.8 459.3 841.6 455.4 843.0 453.5C844.4 451.6 846.8 446.4 847.3 447.5C847.8 448.6 848.5 458.5 847.0 462.0C845.5 465.5 840.3 469.5 836.0 474.0C831.7 478.5 819.7 491.3 814.7 496.0C809.7 500.7 803.6 505.9 798.8 509.5C794.0 513.1 784.8 519.6 779.0 523.0C773.2 526.4 760.5 533.0 755.2 535.0C749.9 537.0 744.1 538.3 739.3 538.0C734.5 537.7 724.8 535.4 719.5 533.0C714.2 530.6 704.6 523.9 699.7 520.0C694.8 516.1 686.0 507.5 683.0 504.0C680.0 500.5 678.0 497.0 677.0 494.0C676.0 491.0 674.5 482.0 675.5 481.8z" fill="#d39e88"/>
<path d="M675.500 482L677 499L678.500 524L678 533M848.500 506L846.800 499L846.100 485L847.300 448" fill="none" stroke="#5a1616" stroke-width="1.400"/>
<!-- EARS -->
<path d="M644 372C640 364 633 360 626 361C620 363 618 370 618 378C619 390 622 402 626 412C631 424 637 434 644 439C648 441 652 440 654 436z" fill="#eebfa6" stroke="#5a1616" stroke-width="1.400"/>
<path d="M625.700 369.900L638 382.500C636 387 634 392 632.600 396L626.500 391.400z" fill="#dba58e"/>
<path d="M632.600 393C635 391 638 390 641 390.500L643 400C643 404 642 408 640 411C637 410 634.500 406 633 402z" fill="#c98c7a"/>
<g fill="none" stroke="#5a1616" stroke-width="1.300"><path d="M626.500 393C625.500 385 625.300 377 625.700 369.900L638 382.500C640 385.500 641.500 388.500 641.900 391.500"/><path d="M637 383.500C634.500 388 633 392 632.600 396"/><path d="M628 402.200C629 406 630.500 409.500 632.600 413"/><path d="M627.200 414.500L630 418.300"/><path d="M641 401C641 406 642.500 410 645.500 413"/></g>
<path d="M846 352L852 344C855 339 858.500 335.500 862 335C866 333 870.500 334.500 873.800 338.200C876.500 342 878 347 879 352.500C880.500 359 881.500 365 881.600 372C881.600 379 881 386 879.600 392.700C878.500 398 876.500 403.500 873.800 408.300C871.500 412 869 415.500 866 417.400C863.500 419.500 861 420.300 858.200 420C855.500 419.500 853.500 418.500 852.300 417.400L846 412z" fill="#eebfa6" stroke="#5a1616" stroke-width="1.500"/>
<path d="M867.900 344C869.500 347 870.800 350.500 871 354C870.500 357.500 869.500 360.500 867.900 363C865.500 364 863 364.500 860.800 364.200L856.500 372L856.200 362z" fill="#dba58e"/>
<path d="M858.200 369.400C860.500 369.200 862.800 369.600 864.700 370.600C867 372.500 868.800 375.300 869.900 378.400C870.800 381.500 871 384.500 870.500 387.500C868.500 389 866 390 863.400 390.100C861.500 389 860 387 859.500 385C859.500 382.500 860 380.500 860.800 378.400z" fill="#c98c7a"/>
<path d="M855 404c4 6 10 8 16 4-4 6-12 8-18 4z" fill="#dba58e"/>
<g fill="none" stroke="#5a1616" stroke-width="1.300"><path d="M856.200 372C859 362 863.500 352 868.600 343.500C870.500 349 871.500 354 871.500 359"/><path d="M859.500 369.400C862.500 368.800 865 370 867 372.500C869 375.500 870 379 870.200 382"/><path d="M857 387.500C855.500 391 855 395 855 398"/><path d="M858.200 391.500C862 390.800 866 390.500 868.600 390.100C870.500 389 872 387.500 872.500 386.200"/><path d="M874.400 394l2-3.300"/></g>
<!-- FACE -->
<path id="face" d="M852.5 375.0C852.3 380.3 852.2 383.7 852.0 391.0C851.8 398.3 851.4 412.0 851.0 419.0C850.6 426.0 850.2 428.2 849.6 433.0C849.0 437.8 848.4 444.1 847.3 447.5C846.2 450.9 844.8 451.1 843.0 453.5C841.2 455.9 839.3 458.7 836.7 461.6C834.1 464.5 830.4 468.3 827.6 471.0C824.8 473.7 823.4 475.0 820.0 478.0C816.6 481.0 810.2 486.2 807.0 489.0C803.8 491.8 804.5 492.1 801.0 494.7C797.5 497.3 789.5 502.3 786.0 504.7C782.5 507.1 783.4 506.9 780.0 508.8C776.6 510.7 770.9 514.4 765.5 516.3C760.1 518.2 753.3 520.2 747.4 520.2C741.5 520.2 735.2 518.1 730.0 516.5C724.8 514.9 721.1 513.0 716.0 510.7C710.9 508.4 704.6 505.5 699.4 502.5C694.1 499.5 688.5 496.1 684.5 492.6C680.5 489.2 678.2 485.7 675.5 481.8C672.8 477.9 670.6 473.9 668.0 469.4C665.4 464.8 662.3 459.7 659.8 454.5C657.3 449.3 655.0 444.3 653.1 438.0C651.2 431.7 649.6 422.8 648.2 416.5C646.8 410.2 645.9 406.1 644.9 400.0C643.9 393.9 642.3 385.8 642.0 380.0C641.7 374.2 642.7 371.2 643.0 365.0C643.3 358.8 643.3 350.2 644.0 343.0C644.7 335.8 645.8 329.0 647.0 322.0C648.2 315.0 649.7 308.0 651.0 301.0C652.3 294.0 651.5 288.5 655.0 280.0C658.5 271.5 662.8 256.5 672.0 250.0C681.2 243.5 697.3 242.8 710.0 241.0C722.7 239.2 735.5 238.5 748.0 239.0C760.5 239.5 773.7 238.8 785.0 244.0C796.3 249.2 806.8 257.3 816.0 270.0C825.2 282.7 833.8 305.2 840.0 320.0C846.2 334.8 850.9 349.8 853.0 359.0C855.1 368.2 852.7 369.7 852.5 375.0z" fill="#eebfa6"/>
<!-- face shading right side / jaw -->
<path d="M851.0 352.0C849.9 352.9 846.0 360.8 845.0 366.0C844.0 371.2 844.5 382.8 843.7 390.8C842.9 398.8 841.2 418.0 839.0 426.2C836.8 434.4 831.3 445.9 827.2 452.2C823.1 458.5 814.6 467.7 808.3 473.4C802.0 479.1 786.2 490.4 780.0 494.7C773.8 499.0 763.9 503.1 762.0 506.0C760.1 508.9 763.1 515.9 765.5 516.3C767.9 516.7 777.3 510.3 780.0 508.8C782.7 507.3 783.2 506.6 786.0 504.7C788.8 502.8 798.2 496.8 801.0 494.7C803.8 492.6 804.5 491.2 807.0 489.0C809.5 486.8 817.3 480.4 820.0 478.0C822.7 475.6 825.4 473.2 827.6 471.0C829.8 468.8 834.6 463.9 836.7 461.6C838.8 459.3 841.6 455.4 843.0 453.5C844.4 451.6 846.4 450.2 847.3 447.5C848.2 444.8 849.1 436.8 849.6 433.0C850.1 429.2 850.7 424.6 851.0 419.0C851.3 413.4 851.8 396.9 852.0 391.0C852.2 385.1 852.4 379.3 852.5 375.0C852.6 370.7 853.2 362.1 853.0 359.0C852.8 355.9 852.1 351.1 851.0 352.0z" fill="#d6a08a"/>
<path d="M642.0 380.0C642.3 384.7 644.1 395.1 644.9 400.0C645.7 404.9 647.1 411.4 648.2 416.5C649.3 421.6 651.6 432.9 653.1 438.0C654.6 443.1 657.8 450.3 659.8 454.5C661.8 458.7 665.9 465.8 668.0 469.4C670.1 473.0 673.3 478.7 675.5 481.8C677.7 484.9 681.3 489.8 684.5 492.6C687.7 495.4 695.2 500.1 699.4 502.5C703.6 504.9 711.9 508.8 716.0 510.7C720.1 512.6 728.1 516.7 730.0 516.5C731.9 516.3 731.9 511.0 730.0 509.1C728.1 507.2 720.5 505.1 716.0 502.5C711.4 499.8 701.0 493.0 696.1 489.3C691.3 485.5 683.3 479.0 679.6 474.4C675.8 469.8 670.8 461.2 668.0 454.5C665.3 447.9 660.7 432.1 658.9 424.8C657.2 417.5 656.0 406.0 654.8 400.0C653.6 394.0 650.9 385.1 650.0 380.0C649.1 374.9 648.9 364.0 648.0 362.0C647.1 360.0 643.8 362.6 643.0 365.0C642.2 367.4 641.7 375.3 642.0 380.0z" fill="#d6a08a"/>
<path d="M651 301C647 322 644 343 643.500 365L650 372C650 350 652 325 657 300z" fill="#d6a08a" opacity=".8"/>
<path d="M852.5 375.0C852.4 377.7 852.2 383.7 852.0 391.0C851.8 398.3 851.4 412.0 851.0 419.0C850.6 426.0 850.2 428.2 849.6 433.0C849.0 437.8 848.4 444.1 847.3 447.5C846.2 450.9 844.8 451.1 843.0 453.5C841.2 455.9 839.3 458.7 836.7 461.6C834.1 464.5 830.4 468.3 827.6 471.0C824.8 473.7 823.4 475.0 820.0 478.0C816.6 481.0 810.2 486.2 807.0 489.0C803.8 491.8 804.5 492.1 801.0 494.7C797.5 497.3 789.5 502.3 786.0 504.7C782.5 507.1 783.4 506.9 780.0 508.8C776.6 510.7 770.9 514.4 765.5 516.3C760.1 518.2 753.3 520.2 747.4 520.2C741.5 520.2 735.2 518.1 730.0 516.5C724.8 514.9 721.1 513.0 716.0 510.7C710.9 508.4 704.6 505.5 699.4 502.5C694.1 499.5 688.5 496.1 684.5 492.6C680.5 489.2 678.2 485.7 675.5 481.8C672.8 477.9 670.6 473.9 668.0 469.4C665.4 464.8 662.3 459.7 659.8 454.5C657.3 449.3 655.0 444.3 653.1 438.0C651.2 431.7 649.6 422.8 648.2 416.5C646.8 410.2 645.9 406.1 644.9 400.0C643.9 393.9 642.5 383.3 642.0 380.0" fill="none" stroke="#4a1212" stroke-width="1.700"/>
<!-- nose shading -->
<path d="M706.9 339.5C707.5 338.5 713.5 338.2 716.0 338.2C718.5 338.2 720.9 339.5 723.8 339.5C726.6 339.5 731.7 338.6 735.0 338.0C738.3 337.4 743.0 337.1 745.8 335.6C748.6 334.1 751.8 328.6 753.6 327.8C755.4 327.0 756.1 329.6 757.5 330.4C758.9 331.2 763.1 331.1 762.7 333.0C762.3 334.9 756.7 340.3 754.9 343.4C753.1 346.5 751.6 350.5 751.0 353.8C750.4 357.1 750.4 362.0 751.0 365.5C751.6 369.0 753.1 373.8 754.9 377.1C756.7 380.4 760.8 385.0 762.7 387.5C764.7 390.0 766.6 392.1 767.9 394.0C769.2 395.9 771.1 398.2 771.2 400.5C771.3 402.8 770.0 407.7 768.6 409.6C767.2 411.5 764.2 412.3 762.1 412.9C760.0 413.5 757.0 412.6 754.9 413.5C752.8 414.4 750.4 417.4 748.4 418.7C746.4 420.0 744.0 421.5 741.9 421.9C739.8 422.3 736.3 422.0 734.2 421.3C732.1 420.6 730.0 418.0 727.7 417.4C725.4 416.8 721.0 417.9 718.6 417.4C716.2 416.9 713.0 416.0 711.4 414.2C709.8 412.4 708.1 408.1 708.2 405.7C708.3 403.3 710.7 400.6 712.1 397.9C713.5 395.2 716.0 391.0 717.3 387.5C718.6 384.0 719.8 378.8 720.5 374.5C721.2 370.2 722.0 362.9 721.8 359.0C721.6 355.1 720.7 350.7 719.2 348.6C717.7 346.5 713.9 346.1 712.1 344.7C710.3 343.3 706.3 340.5 706.9 339.5z" fill="#d19882"/>
<path d="M728.3 338.0C729.3 336.2 733.0 334.6 735.0 334.0C737.0 333.4 740.9 332.2 741.9 334.0C742.9 335.8 741.9 342.2 741.9 346.0C741.9 349.8 741.8 355.1 741.9 359.0C742.0 362.9 742.2 368.4 742.6 371.9C743.0 375.4 743.8 379.2 744.5 382.3C745.2 385.4 746.8 390.0 747.1 392.7C747.4 395.4 747.1 398.6 746.5 400.5C745.9 402.4 744.6 404.7 743.2 405.7C741.8 406.7 738.9 406.9 737.4 407.0C735.9 407.1 734.3 407.0 732.9 406.4C731.5 405.8 729.2 404.8 728.3 403.1C727.4 401.4 727.0 398.0 727.0 395.3C727.0 392.6 727.9 388.4 728.3 384.9C728.7 381.4 729.4 375.8 729.6 371.9C729.8 368.0 729.8 362.9 729.6 359.0C729.4 355.1 728.5 349.1 728.3 346.0C728.1 342.9 727.3 339.8 728.3 338.0z" fill="#eebfa6"/>
<ellipse cx="717.900" cy="401.800" rx="4.600" ry="3.300" transform="rotate(20 717.900 401.800)" fill="#e9b59d"/>
<ellipse cx="757.800" cy="399.200" rx="6" ry="3.300" transform="rotate(12 757.800 399.200)" fill="#e9b59d"/>
<path d="M712.700 397.900C709.500 400 708 402.500 708.200 405C708.500 409 709.500 411.500 710.800 413.500C712.500 416 715 417 717.900 417.400" fill="none" stroke="#561814" stroke-width="1.500"/>
<path d="M766.600 392.100C769.500 394.500 771 397.500 771.200 400.500C771.300 404 770 407 767.900 409.600C766.500 411.300 764.500 412.200 762.100 412.500" fill="none" stroke="#561814" stroke-width="1.500"/>
<path d="M719.900 411.600C721.500 409.500 723.500 408.300 726.400 408.300C729.500 408.300 732 410 733.500 412.200" fill="none" stroke="#561814" stroke-width="1.400"/>
<path d="M746.500 409.600C748 407.200 750.500 405.700 753.600 405.700C756.800 405.700 759.300 407.500 760.800 410.300" fill="none" stroke="#561814" stroke-width="1.400"/>
<circle cx="737" cy="397.700" r="2.300" fill="#fff"/>
<circle cx="692" cy="403" r="3.500" fill="#f8dccf" opacity=".4"/>
<!-- brows -->
<path d="M655 348C656 341 659 336 664 332C670 328 678 326 688 326C697 325 706 326 713 328C715 331 715 334 714 337C706 336 698 335 690 336C680 337 670 339 662 343C659 345 657 347 655 348z" fill="#684c4c"/>
<path d="M754 325C758 321 764 318 772 316C782 313 794 312 804 314C811 316 816 320 819 330C815 328 810 326 804 325C794 323 784 323 774 325C767 327 761 329 755 332C754 330 754 327 754 325z" fill="#684c4c"/>
<!-- eyes -->
<path d="M672 354C680 349 688 347 694 347C701 347 708 349 713 352" fill="none" stroke="#b07868" stroke-width="1.200"/>
<path d="M761 347C768 342 777 339.500 785 339.500C794 339.500 803 342 810 346" fill="none" stroke="#b07868" stroke-width="1.200"/>
<path d="M665.500 362C669 358 673 355 678 353C683 351 688 350 693 350C698 350 703 351 708 353C710 354 712 355 713.500 357C710 359 706 360.500 701.500 361.500C696 363 691 363.500 686.500 363.500C681 363.500 676 363 672 362.500z" fill="#3a100e"/>
<path d="M669 361.500L679.500 356.500L684.500 362.500C679 363 674 362.500 669 361.500z" fill="#fbeee8"/>
<path d="M701 354.500L710.500 356.500C708 358.500 705 359.500 702 360.500z" fill="#fbeee8"/>
<circle cx="690" cy="357" r="1.400" fill="#fff"/>
<path d="M665.500 362C669 358 673 355 678 353C683 351 688 350 693 350C698 350 703 351 708 353C710 354 712 355 713.500 357" fill="none" stroke="#3a100e" stroke-width="1.800"/>
<path d="M671 370c8 5 20 5 30 0" fill="none" stroke="#e2ae96" stroke-width="1.300"/>
<path d="M760 351.500C764 348 769 345.500 774 344.500C780 343 786 342.500 792 343C797 343.500 802 344.500 806 346.500C808 347.500 810 348 811 349C807 350.500 802 351.500 796 352.500C790 353.500 784 353.500 778 353C772 353 766 352.500 760 351.500z" fill="#3a100e"/>
<path d="M764 351L773 346.500L777.500 352.500C773 352.500 768 352 764 351z" fill="#fbeee8"/>
<path d="M795 345.500L805 347.500C802 349.500 799 350.500 796 351z" fill="#fbeee8"/>
<circle cx="783.500" cy="347.500" r="1.400" fill="#fff"/>
<path d="M760 351.500C764 348 769 345.500 774 344.500C780 343 786 342.500 792 343C797 343.500 802 344.500 806 346.500C808 347.500 810 348 811 349" fill="none" stroke="#3a100e" stroke-width="1.800"/>
<path d="M766 359c10 5 26 4 36-1" fill="none" stroke="#e2ae96" stroke-width="1.300"/>
<!-- mouth -->
<path d="M706 452C712 448 718 444 724 441C730 438 736 436 741 437C744 438 746 439 749 438C752 436 755 435 758 435C766 436 774 439 781 442C784 442 787 441 789 441C786 444 782 446 776 448C766 450 756 451 745 451C734 452 720 453 711 453z" fill="#b8606a"/>
<path d="M711 453C720 453 734 452 745 451C756 451 766 449 776 447C772 454 766 460 758 463C750 466 740 466 732 464C724 462 716 458 711 453z" fill="#da878e"/>
<path d="M736 459c8 1 18-2 26-7-6 7-16 11-26 7z" fill="#f2adb4"/>
<path d="M706 452C708 453 710 453 712 453C722 453 734 452 745 450C758 450 772 447 786 442" fill="none" stroke="#7a2c34" stroke-width="1.300"/>
<circle cx="706" cy="452" r="2.200" fill="#c88c80"/><circle cx="788" cy="441.500" r="1.800" fill="#c88c80"/>
<path d="M722 463c8 6 28 7 48-4-10 11-34 14-48 4z" fill="#d09a84"/>
<!-- HAIR -->
<path id="hair" d="M641 380C638 372 636 365 634.800 359C633.500 352 633 344 632.700 337C632 327 631.500 318 631.200 308C630.500 299 629.500 290 628.400 280C627 276 626 272 626 269C627 263 629 258 631 254C635 249 639 245 643 242C647 239 650 237 653 234C651 232 649 230 648 228C644 223 641 218 639 212C636 206 635 200 635 194C636 188 637 183 639 179C642 174 645 170 648 166C651 162 655 159 660 157C665 155 671 155 678 155C685 156 692 157 698 159C703 161 707 164 711 166C714 167 716 168 718 168C722 165 725 163 729 161C734 158 739 157 745 157C752 156 759 155 766 156C771 157 776 158 781 161C786 164 790 168 794 171C798 174 801 176 804 179C807 181 809 184 810 188C811 192 810 195 808 198C810 201 812 203 815 205C819 209 824 213 828 218C832 223 837 228 840 233C842 237 844 240 846 242C848 245 851 246 852 249C853 251 851 253 850 255C852 262 854 268 855 275C857 283 858 292 859 300C859 307 860 314 860 321C860.500 327 860 333 859 339C858 346 856 353 853.200 360C851.500 353 849.500 346 847.300 339C845 332 842.500 326 840 321C838 314 835 307 833 300C830 295 828 290 825 285C822 279 818 274 815 269C811 264 806 258 802 254C798 251 793 248 789 246C785 244 780 243 776 242C771 241 765 240 760 240C755 239 750 240 745 240L735 244L724 242L709 243.500L690 243.500C685 245 680 246 675 249C671 252 667 255 663 259C660 264 657.500 270 655.300 280C653.500 287 652 294 651 301C649.500 308 648 315 646.800 322.500C645.500 330 644.500 337 644 344C643.500 351 643.300 358 643.300 365C643 370 642.500 375 641 380z" fill="#2a2321" stroke="#4a1212" stroke-width="1.400"/>
<!-- hair highlights -->
<path fill="#4f4541" d="M659.5 178.8Q653.6 200.4 675.0 207.2Q672.9 189.9 659.5 178.8zM669.8 184.0Q666.3 206.0 685.3 217.6Q682.3 198.6 669.8 184.0zM677.6 191.7Q679.5 215.6 703.4 217.6Q695.1 200.1 677.6 191.7zM685.3 199.5Q689.8 219.6 708.6 227.9Q700.0 211.2 685.3 199.5zM698.3 189.1Q697.4 215.9 724.1 217.6Q716.9 198.1 698.3 189.1zM711.2 178.8Q710.8 202.8 734.5 207.2Q727.8 188.9 711.2 178.8zM724.1 186.6Q721.6 210.7 744.8 217.6Q739.9 198.5 724.1 186.6zM734.5 191.7Q734.3 215.0 755.2 225.3Q749.2 205.8 734.5 191.7zM747.4 178.8Q743.8 200.6 765.5 204.7Q761.8 188.0 747.4 178.8zM755.2 191.7Q755.2 214.1 775.9 222.8Q769.8 204.4 755.2 191.7zM768.1 184.0Q769.8 201.3 786.2 207.2Q780.2 193.2 768.1 184.0zM775.9 202.1Q773.0 221.4 791.4 227.9Q788.1 212.3 775.9 202.1zM786.2 191.7Q786.4 206.0 799.1 212.4Q795.3 200.4 786.2 191.7zM796.6 217.6Q795.3 230.3 806.9 235.7Q804.4 225.1 796.6 217.6zM806.9 222.8Q807.0 237.1 819.8 243.4Q816.0 231.5 806.9 222.8zM817.2 253.8Q816.2 265.7 827.6 269.3Q825.0 259.8 817.2 253.8zM822.4 269.3Q822.2 287.0 837.9 295.2Q833.5 280.2 822.4 269.3zM832.8 284.8Q832.0 306.6 848.3 321.0Q844.1 301.4 832.8 284.8zM843.1 305.5Q841.8 325.9 854.7 341.7Q851.9 322.7 843.1 305.5zM631.0 269.3Q647.0 269.0 651.7 253.8Q639.1 258.4 631.0 269.3zM633.6 279.7Q646.1 278.9 649.1 266.7Q639.4 270.8 633.6 279.7zM636.2 292.6Q644.8 293.4 645.3 284.8Q639.0 286.7 636.2 292.6zM633.6 310.7Q645.0 307.1 644.0 295.2Q636.2 301.2 633.6 310.7zM636.2 331.4Q644.7 325.6 641.4 315.9Q636.3 322.8 636.2 331.4zM680.2 215.0Q680.0 227.1 690.5 233.1Q687.6 222.8 680.2 215.0zM664.7 207.2Q666.1 219.9 677.6 225.3Q673.2 214.8 664.7 207.2zM651.7 186.6Q650.0 202.2 662.1 212.4Q659.8 198.3 651.7 186.6zM713.8 204.7Q714.3 221.1 729.3 227.9Q724.6 214.3 713.8 204.7zM744.8 215.0Q746.9 228.9 760.3 233.1Q754.9 222.0 744.8 215.0zM765.5 217.6Q769.3 228.8 781.0 230.5Q774.9 222.1 765.5 217.6zM638.8 341.7Q645.5 336.7 642.7 328.8Q638.8 334.7 638.8 341.7zM693.1 217.6Q697.8 231.0 711.2 235.7Q704.0 224.8 693.1 217.6zM721.6 222.8Q726.4 235.7 739.7 239.6Q732.4 229.3 721.6 222.8zM752.6 225.3Q758.4 236.4 770.7 238.3Q763.0 229.9 752.6 225.3zM781.0 225.3Q785.0 236.6 796.6 239.6Q790.4 230.7 781.0 225.3zM801.7 202.1Q802.9 215.7 814.7 222.8Q810.4 211.0 801.7 202.1zM814.7 227.9Q816.4 241.2 827.6 248.6Q823.1 237.0 814.7 227.9zM827.6 251.2Q827.9 263.0 837.9 269.3Q834.8 259.1 827.6 251.2zM651.7 217.6Q654.2 228.0 664.7 230.5Q659.8 222.4 651.7 217.6zM641.4 199.5Q641.6 212.3 651.7 220.2Q648.6 208.8 641.4 199.5zM734.5 168.4Q739.9 180.4 752.6 184.0Q745.0 174.4 734.5 168.4zM677.6 168.4Q683.0 180.4 695.7 184.0Q688.2 174.4 677.6 168.4zM770.7 168.4Q775.3 178.7 786.2 181.4Q779.8 173.3 770.7 168.4zM836.6 264.1Q836.6 276.5 845.7 284.8Q843.1 273.7 836.6 264.1zM644.0 248.6Q653.3 250.7 659.5 243.4Q651.1 244.1 644.0 248.6z"/>
</g>
</svg>
</div>
<div id="bot">
 <svg class="abs" style="left:0;top:0" width="833" height="42" viewBox="327 805 833 42" fill="none" stroke="#ececf1" stroke-width="1.600" stroke-linecap="round" stroke-linejoin="round">
  <g stroke="none"><rect x="343" y="813" width="32" height="32" rx="4" fill="#282a37"/><rect x="383" y="813" width="32" height="32" rx="4" fill="#282a37"/><rect x="423" y="813" width="32" height="32" rx="4" fill="#2e3040"/>
  <rect x="574" y="813" width="32" height="32" rx="4" fill="#2e3040"/><rect x="614" y="813" width="32" height="32" rx="4" fill="#2e3040"/>
  <rect x="997" y="813" width="32" height="32" rx="4" fill="#2e3040"/><rect x="1037" y="813" width="32" height="32" rx="4" fill="#282a37"/><rect x="1077" y="813" width="32" height="32" rx="4" fill="#282a37"/><rect x="1117" y="813" width="32" height="32" rx="4" fill="#2e3040"/></g>
  <!-- layers -->
  <g stroke="#9a9ca8" stroke-width="1.300"><path d="M359 821.200l7.800 4.100-7.800 4.200-7.800-4.200z"/><path d="M353 828.300l-1.800 1 7.800 4.200 7.800-4.200-1.800-1M353 832l-1.800 1 7.800 4.200 7.800-4.200-1.800-1"/></g>
  <!-- flatten -->
  <g stroke="#6f717d" stroke-width="1.300" stroke-linejoin="miter"><path d="M396.800 826.600v-5.100h9.800v9.800h-4.700"/><rect x="391.600" y="826.600" width="10.300" height="10.100"/><path d="M391.600 836.700l15-15.200"/></g>
  <!-- grid -->
  <g stroke-width="1.500" stroke-linejoin="miter"><rect x="431.800" y="822" width="5.200" height="5.200" rx=".3"/><rect x="441" y="822" width="5.200" height="5.200" rx=".3"/><rect x="431.800" y="830.900" width="5.200" height="5.200" rx=".3"/><rect x="441" y="830.900" width="5.200" height="5.200" rx=".3"/></g>
  <!-- fullscreen -->
  <g stroke-width="1.700"><path d="M582.700 827v-5h5.300M592 822h5.300v5M597.300 831v5H592M588 836h-5.300v-5"/></g>
  <!-- fit -->
  <g stroke-width="1.700"><path d="M622.800 826.500V822h4.700M637.300 831.300v4.700h-4.700"/><path d="M637.600 821.700l-5.600 5.600M632 822.800v4.500h4.500M622.600 836.400l5.600-5.600M628.200 835.300v-4.500h-4.500"/></g>
  <!-- minus / slider / plus -->
  <circle cx="670" cy="829" r="7.600" stroke-width="1.500"/><path d="M665.600 829h8.800" stroke-width="1.600"/>
  <path d="M692 829h125" stroke="#474a63" stroke-width="2"/><path d="M691.500 829h8" stroke="#ececf1" stroke-width="2"/>
  <circle cx="707" cy="829" r="6.500" fill="#232531" stroke-width="2"/>
  <circle cx="838" cy="829" r="7.600" stroke-width="1.500"/><path d="M833.600 829h8.800M838 824.600v8.800" stroke-width="1.600"/>
  <rect x="862.500" y="820.500" width="44" height="17" rx="3" stroke="#343648" stroke-width="1"/>
  <!-- sync -->
  <g stroke-width="1.600" transform="translate(2026,0) scale(-1,1)"><path d="M1006.500 826.500a7 7 0 0 1 12.300-2.400l1.200 1.500M1019.600 831a7 7 0 0 1-12.400 2.400l-1.200-1.500"/><path d="M1020.300 821.300v4.500h-4.500M1005.800 836.400v-4.500h4.500"/></g>
  <!-- undo / redo -->
  <g stroke="#6f717d" stroke-width="1.400"><path d="M1049 822.500l-4.300 4.300 4.300 4.300M1044.900 826.800h12.600a4.300 4.300 0 0 1 0 8.600h-4.100"/><path d="M1097.200 822.500l4.300 4.300-4.300 4.300M1101.300 826.800h-12.600a4.300 4.300 0 0 0 0 8.600h4.100"/></g>
  <!-- history -->
  <g stroke-width="1.600"><path d="M1126.200 825.800a7.300 7.300 0 1 1-.6 3.700"/><path d="M1125.800 821.300v4.700h4.700"/><path d="M1132.600 824.800v4.300l2.700 2.700"/></g>
  <text x="903.300" y="833" text-anchor="end" font-family="Liberation Sans,sans-serif" font-size="11" fill="#e6e7ee" stroke="none" letter-spacing=".6">60%</text>
 </svg>
</div>
</body>
</html>
